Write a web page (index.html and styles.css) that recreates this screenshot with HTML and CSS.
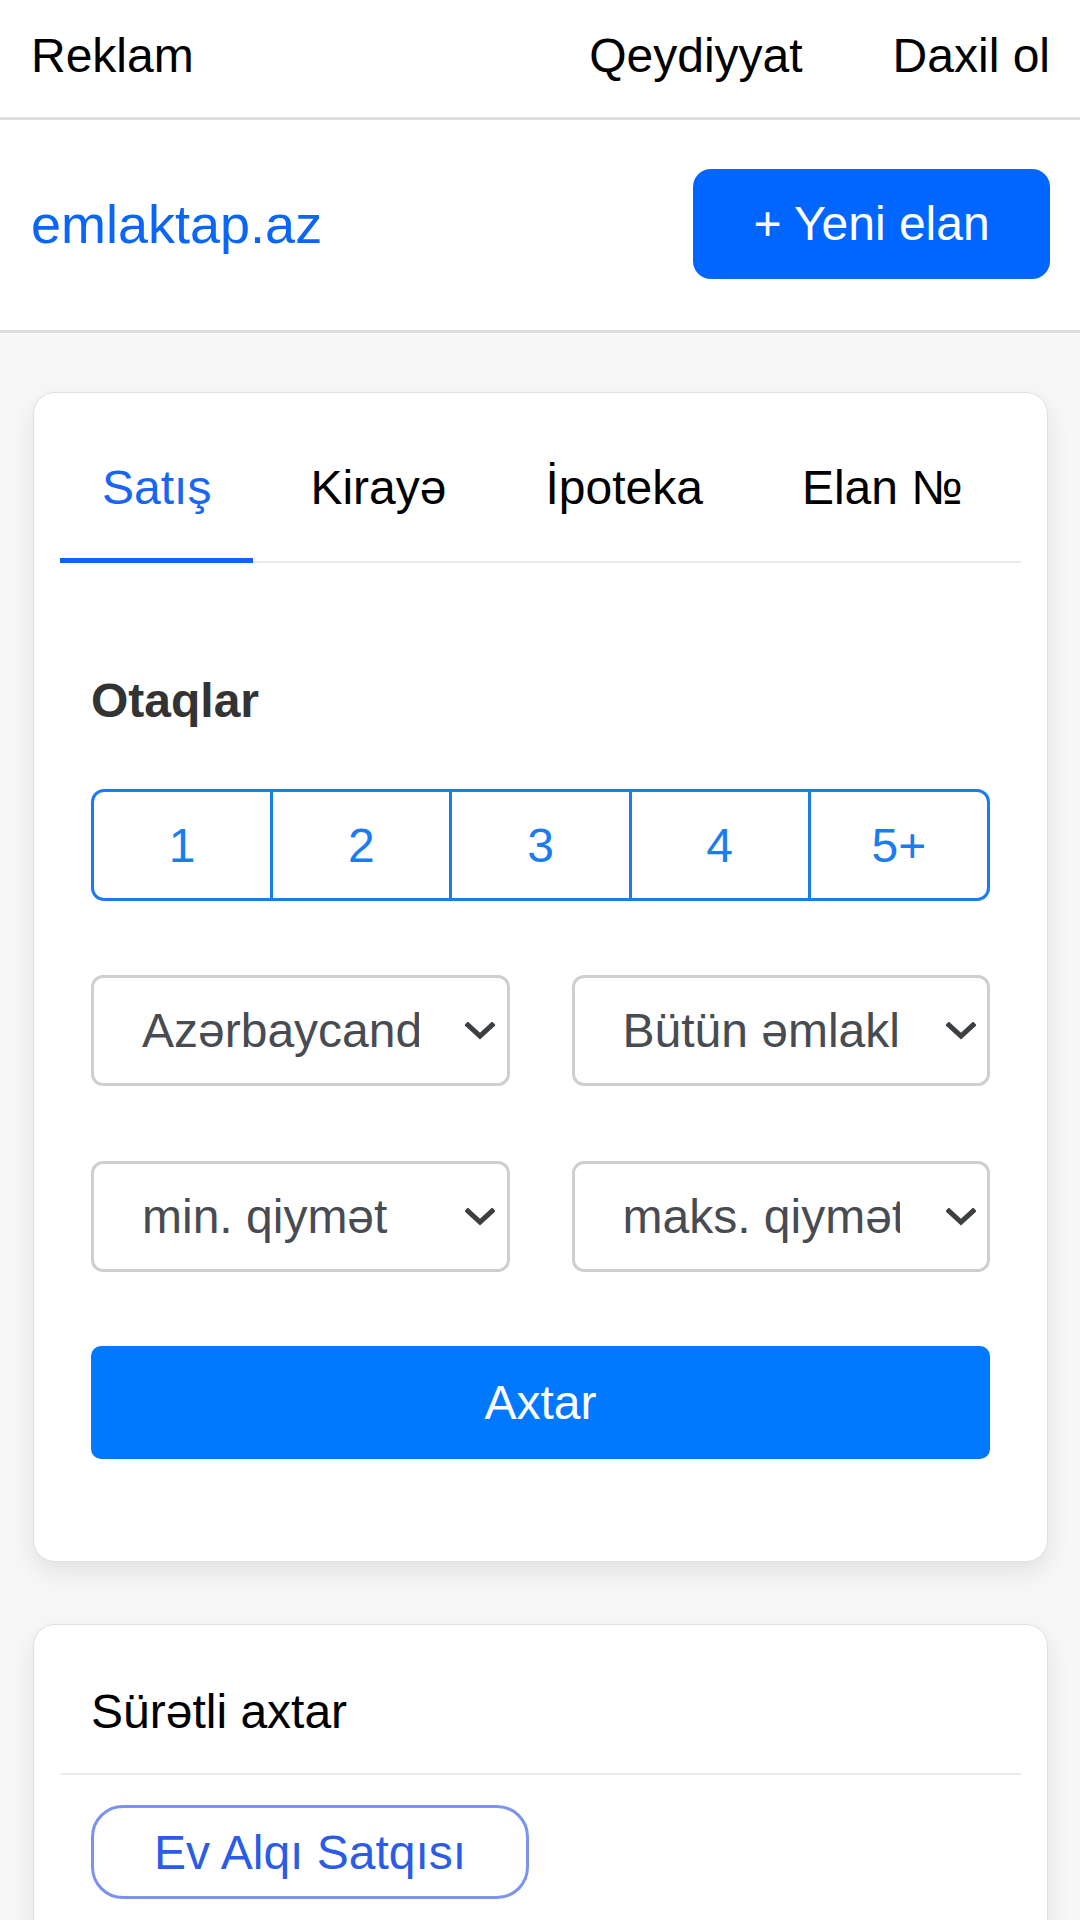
FILE: index.html
```html
<!DOCTYPE html>
<html lang="az">
<head>
<meta charset="utf-8">
<title>emlaktap.az</title>
<link rel="stylesheet" href="styles.css">
</head>
<body>
<nav class="topbar">
  <a class="top-link">Reklam</a>
  <div class="top-right">
    <a class="top-link">Qeydiyyat</a>
    <a class="top-link">Daxil ol</a>
  </div>
</nav>
<header class="brandbar">
  <a class="logo">emlaktap.az</a>
  <a class="new-btn">+ Yeni elan</a>
</header>
<main class="page">
  <section class="card search-card">
    <div class="tabs">
      <a class="tab active">Satış</a>
      <a class="tab">Kirayə</a>
      <a class="tab">İpoteka</a>
      <a class="tab">Elan №</a>
    </div>
    <div class="tab-body">
      <h3 class="label">Otaqlar</h3>
      <div class="rooms">
        <span class="room">1</span>
        <span class="room">2</span>
        <span class="room">3</span>
        <span class="room">4</span>
        <span class="room">5+</span>
      </div>
      <div class="select-grid">
        <div class="select"><span class="select-text">Azərbaycanda</span><svg class="chev" viewBox="0 0 30 18"><path d="M3 3 L15 14 L27 3" fill="none" stroke="#3c4043" stroke-width="5" stroke-linecap="square"/></svg></div>
        <div class="select"><span class="select-text">Bütün əmlaklar</span><svg class="chev" viewBox="0 0 30 18"><path d="M3 3 L15 14 L27 3" fill="none" stroke="#3c4043" stroke-width="5" stroke-linecap="square"/></svg></div>
        <div class="select"><span class="select-text">min. qiymət</span><svg class="chev" viewBox="0 0 30 18"><path d="M3 3 L15 14 L27 3" fill="none" stroke="#3c4043" stroke-width="5" stroke-linecap="square"/></svg></div>
        <div class="select"><span class="select-text">maks. qiymət</span><svg class="chev" viewBox="0 0 30 18"><path d="M3 3 L15 14 L27 3" fill="none" stroke="#3c4043" stroke-width="5" stroke-linecap="square"/></svg></div>
      </div>
      <a class="search-btn">Axtar</a>
    </div>
  </section>
  <section class="card quick-card">
    <div class="quick-head">Sürətli axtar</div>
    <div class="quick-body">
      <a class="pill">Ev Alqı Satqısı</a>
    </div>
  </section>
</main>
</body>
</html>
```
FILE: styles.css
```css
* { box-sizing: border-box; }
html, body { margin: 0; padding: 0; }
body {
  font-family: "Liberation Sans", Arial, sans-serif;
  font-size: 48px;
  line-height: 55px;
  color: #000;
  background: #f7f7f7;
  width: 1080px;
  height: 1920px;
  overflow: hidden;
}
a { text-decoration: none; color: inherit; }

.topbar {
  display: flex;
  justify-content: space-between;
  background: #fff;
  padding: 28px 30px 34px 31px;
  border-bottom: 3px solid #dedede;
}
.top-right { display: flex; gap: 90px; }

.brandbar {
  display: flex;
  justify-content: space-between;
  align-items: center;
  background: #fff;
  height: 213px;
  padding: 0 30px 3px 31px;
  border-bottom: 3px solid #dedede;
}
.logo { color: #0a66f7; font-size: 54px; line-height: 62px; }
.new-btn {
  background: #0066ff;
  color: #fff;
  border-radius: 18px;
  width: 357px;
  height: 110px;
  display: flex;
  align-items: center;
  justify-content: center;
}

.page { padding: 59px 32px 0 33px; }

.card {
  background: #fff;
  border: 1px solid #e0e0e0;
  border-radius: 22px;
  box-shadow: 0 10px 26px rgba(0,0,0,0.09);
  padding: 27px 26px;
}

.tabs {
  display: flex;
  gap: 15px;
  border-bottom: 2px solid #ececec;
}
.tab {
  padding: 40px 42px 43px;
  margin-bottom: -2px;
  border-bottom: 5px solid transparent;
  color: #000;
}
.tab.active { color: #1766f5; border-bottom-color: #0a66f7; }

.tab-body { padding: 110px 31px 75px; }
.label {
  margin: 0 0 61px;
  font-size: 48px;
  line-height: 55px;
  font-weight: bold;
  color: #333;
}
.rooms {
  display: flex;
  height: 112px;
  border: 3px solid #1a7cf0;
  border-radius: 13px;
  overflow: hidden;
  margin-bottom: 74px;
}
.room {
  flex: 1;
  display: flex;
  align-items: center;
  justify-content: center;
  color: #1a7cf0;
  border-right: 3px solid #1a7cf0;
}
.room:last-child { border-right: none; }

.select-grid {
  display: grid;
  grid-template-columns: 1fr 1fr;
  column-gap: 62px;
  row-gap: 75px;
  margin-bottom: 74px;
}
.select {
  height: 111px;
  border: 3px solid #cfcfcf;
  border-radius: 12px;
  display: flex;
  align-items: center;
  padding-left: 48px;
  color: #484c52;
}
.select-text {
  width: 277px;
  white-space: nowrap;
  overflow: hidden;
}
.chev {
  width: 30px;
  height: 18px;
  margin-left: 46px;
}

.search-btn {
  display: flex;
  align-items: center;
  justify-content: center;
  height: 113px;
  background: #0079ff;
  color: #fff;
  border-radius: 10px;
}

.quick-card { margin-top: 62px; padding-bottom: 40px; }
.quick-head {
  padding: 32px 31px 34px;
  border-bottom: 2px solid #ececec;
}
.quick-body { padding: 30px 31px 0; display: flex; }
.pill {
  border: 3px solid #7b93ee;
  border-radius: 32px;
  color: #2b5ce6;
  height: 94px;
  padding: 0 60px;
  display: flex;
  align-items: center;
}
```
